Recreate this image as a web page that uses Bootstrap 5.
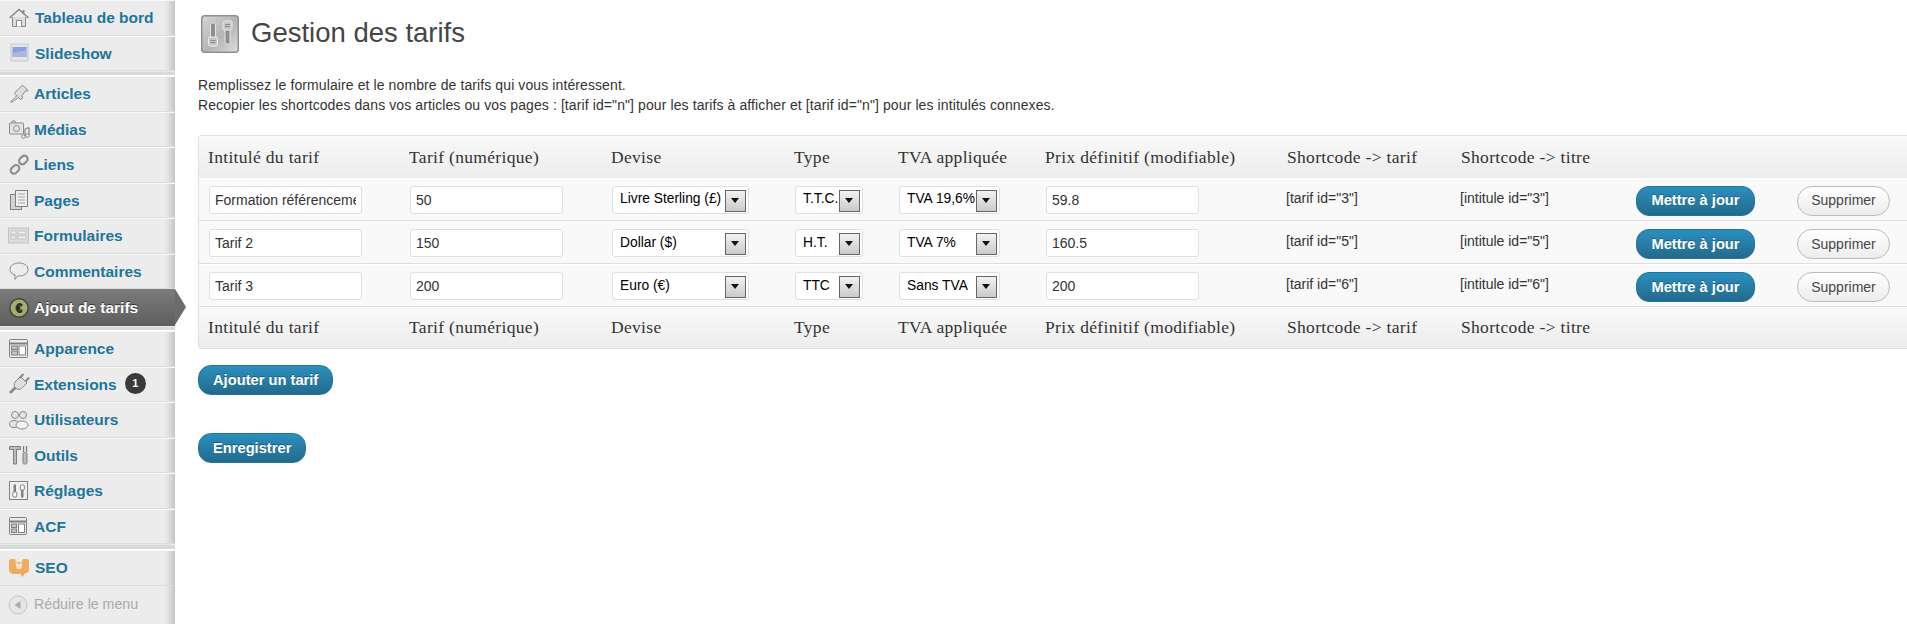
<!DOCTYPE html>
<html lang="fr">
<head>
  <meta charset="UTF-8" />
  <meta name="viewport" content="width=device-width, initial-scale=1.0" />
  <title>Gestion des tarifs</title>
  <link href="https://cdn.jsdelivr.net/npm/bootstrap@5.3.0/dist/css/bootstrap.min.css" rel="stylesheet" />
  <style>
    html, body { height: 100%; overflow: hidden; }
    body { font-family: "Liberation Sans", Arial, sans-serif; font-size: 14px; color: #333; background: #fff; }

    /* admin menu */
    .side-menu { width: 175px; flex: none; height: 624px; background: linear-gradient(to right, #ececec 164px, #e2e2e2 168px, #c4c4c4 175px); }
    .menu-link { height: 35.5px; padding: 1px 0 0 8px; gap: 4px; color: #21759b; font-weight: 700; font-size: 15.5px; text-decoration: none; border-bottom: 1px solid #dcdcdc; box-shadow: inset 0 1px 0 #f8f8f8; }
    .menu-link svg { width: 22px; height: 22px; flex: none; }
    .menu-link.wide-gap { gap: 5px; }
    .menu-link.active-item { height: 37px; position: relative; color: #fff; border: 0; box-shadow: none; background: linear-gradient(#7b7b7b, #5e5e5e); text-shadow: 0 -1px 0 #333; }
    .menu-link.active-item::after { content: ""; position: absolute; left: 175px; top: 0; border-style: solid; border-width: 18.5px 0 18.5px 11px; border-color: transparent transparent transparent #6c6c6c; }
    .menu-gap { height: 5px; background: #d9d9d9; border-top: 1px solid #e8e8e8; border-bottom: 1px solid #fff; }
    .menu-gap.gap-large { height: 6px; }
    .update-count { width: 21px; height: 21px; margin: -1px 0 1px 4px; background: #3a3a3a; color: #fff; font-size: 11px; border-radius: 50%; }
    .menu-foot { height: 38px; padding-left: 8px; gap: 6px; color: #aaa; font-size: 14.2px; }
    .menu-foot svg { width: 20px; height: 20px; }

    /* content */
    .page-area { min-width: 0; padding: 15px 0 0 23px; overflow: hidden; }
    .page-head { margin-left: 3px; gap: 12px; height: 38px; }
    .head-icon { width: 38px; height: 38px; flex: none; }
    .page-head h2 { font-size: 27.5px; font-weight: 400; color: #464646; margin: 0 0 2px; line-height: 34px; }
    .intro-text { margin: 22px 0 0; line-height: 20px; font-size: 14px; letter-spacing: .1px; color: #333; }

    /* tarifs table */
    .tarif-wrap { width: 1760px; margin-top: 20px; border: 1px solid #dfdfdf; border-radius: 3px; overflow: hidden; }
    .tarif-table { table-layout: fixed; width: 1760px; margin: 0; --bs-table-bg: #f9f9f9; }
    .tarif-table col:nth-child(1) { width: 202px; }
    .tarif-table col:nth-child(2) { width: 202px; }
    .tarif-table col:nth-child(3) { width: 183px; }
    .tarif-table col:nth-child(4) { width: 104px; }
    .tarif-table col:nth-child(5) { width: 147px; }
    .tarif-table col:nth-child(6) { width: 242px; }
    .tarif-table col:nth-child(7) { width: 174px; }
    .tarif-table col:nth-child(8) { width: 174px; }
    .tarif-table col:nth-child(9) { width: 161px; }
    .tarif-table th { height: 41.5px; padding: 0 8px; vertical-align: middle; border: 0; font-family: "Liberation Serif", "Times New Roman", serif; font-size: 17.5px; letter-spacing: .32px; font-weight: 400; color: #333; white-space: nowrap; --bs-table-bg: transparent; }
    .tarif-table th:first-child { padding-left: 9px; }
    .tarif-table thead tr, .tarif-table tfoot tr { background: linear-gradient(#f9f9f9, #ececec); }
    .tarif-table td { height: 43px; padding: 8px 0 0 9px; vertical-align: top; border: 0; border-bottom: 1px solid #dfdfdf; box-shadow: inset 0 1px 0 #fff; }
    .tarif-table td:first-child { padding-left: 10px; }
    .code-cell.code-cell { padding-left: 7px; font-size: 14px; line-height: 24px; color: #333; }
    .tarif-input.form-control { height: 28px; width: 153px; padding: 0 5px; font-size: 14px; color: #333; border: 1px solid #dfdfdf; border-radius: 3px; box-shadow: none; }
    .pick-box { position: relative; height: 28px; background: #fff; border: 1px solid #dfdfdf; border-radius: 3px; overflow: hidden; }
    .pick-devise { width: 137px; }
    .pick-type { width: 68px; }
    .pick-tva { width: 101px; }
    .pick-box select { width: 100%; height: 26px; padding: 0 23px 0 7px; border: 0; background: transparent; appearance: none; font-size: 13.8px; color: #000; outline: 0; }
    .pick-arrow { position: absolute; right: 2px; top: 3px; width: 21px; height: 22px; border: 1px solid #666; background: linear-gradient(#f2f2f2, #cacaca); pointer-events: none; }
    .pick-arrow::after { content: ""; position: absolute; left: 5px; top: 7px; border-style: solid; border-width: 5px 4.5px 0; border-color: #111 transparent transparent; }
    .btn-save.btn { height: 30px; padding: 0 14px; font-size: 14.7px; font-weight: 700; color: #fff; border: 1px solid #21759b; border-radius: 13px; background: linear-gradient(#2b8fbe, #236a8c); text-shadow: 0 -1px 0 rgba(0,0,0,.3); white-space: nowrap; }
    .btn-save.btn-update { width: 119px; padding: 0; }
    .btn-remove.btn { width: 93px; height: 30px; padding: 0; font-size: 14px; color: #464646; border: 1px solid #bbb; border-radius: 15px; background: linear-gradient(#fff, #ececec); }
    .table-actions { margin-top: 16px; }
    .form-foot { margin-top: 38px; }
  </style>
</head>
<body>
  <div class="d-flex">
    <nav class="side-menu d-flex flex-column">
      <a class="menu-link wide-gap d-flex align-items-center" href="#">
        <svg viewBox="0 0 22 22" fill="none" stroke="#8a8a8a"><path d="M1.500 11 11 2.500 20.500 11" stroke-width="1.600"/><path d="M4.500 10v9.500h13V10" fill="#ddd"/><path d="M8.500 19.500v-6h5v6" fill="#fff"/><path d="M15.500 3v3.500" stroke-width="2"/></svg>
        Tableau de bord</a>
      <a class="menu-link wide-gap d-flex align-items-center" href="#">
        <svg viewBox="0 0 22 22"><rect x="3" y="2" width="17" height="17" fill="#e2e6e8" stroke="#c6c9cb"/><rect x="4.500" y="5" width="14" height="10" fill="#8c9fd8"/><path d="M4.500 11l6-1 8-2v7h-14z" fill="#a9b7e2"/></svg>
        Slideshow</a>
      <div class="menu-gap"></div>
      <a class="menu-link d-flex align-items-center" href="#">
        <svg viewBox="0 0 22 22" fill="#dcdcdc" stroke="#8a8a8a"><path d="M11 5.500 14.500 2l5.500 5.500-3 1-3 4 .5 3-2 1-6-6 1-1.500z"/><path d="M9 12.500 2.500 19l1 .500 7-5" /></svg>
        Articles</a>
      <a class="menu-link d-flex align-items-center" href="#">
        <svg viewBox="0 0 22 22" fill="none" stroke="#8a8a8a"><rect x="1.500" y="5" width="14" height="11" rx="1" fill="#e4e4e4"/><circle cx="8.500" cy="10.500" r="3"/><path d="M4 5V3h3v2"/><path d="M17 11V18M21 9.500V17M17 11l4-1.500" stroke-width="1.300"/><circle cx="15.500" cy="18.500" r="1.800"/><circle cx="19.500" cy="17.500" r="1.800"/></svg>
        Médias</a>
      <a class="menu-link d-flex align-items-center" href="#">
        <svg viewBox="0 0 22 22" fill="none" stroke="#8f8f8f" stroke-width="2.200"><rect x="10.500" y="3" width="9.500" height="6.500" rx="3.200" transform="rotate(-45 15 6)"/><rect x="2" y="12" width="9.500" height="6.500" rx="3.200" transform="rotate(-45 7 15)"/></svg>
        Liens</a>
      <a class="menu-link d-flex align-items-center" href="#">
        <svg viewBox="0 0 22 22" stroke="#808080"><rect x="2.500" y="5.500" width="11" height="15" fill="#d4d4d4"/><rect x="7.500" y="1.500" width="12" height="16" fill="#eee"/><path d="M10 5h7M10 8h7M10 11h7M10 14h7" stroke="#aaa"/></svg>
        Pages</a>
      <a class="menu-link d-flex align-items-center" href="#">
        <svg viewBox="0 0 22 22" fill="#f2f2f2" stroke="#c2c2c2"><rect x=".5" y="3" width="20" height="15" fill="#ddd"/><rect x="3" y="6" width="5" height="3"/><rect x="10" y="6" width="8" height="3"/><rect x="3" y="11" width="5" height="3"/><rect x="10" y="11" width="8" height="3"/></svg>
        Formulaires</a>
      <a class="menu-link d-flex align-items-center" href="#">
        <svg viewBox="0 0 22 22" stroke="#8a8a8a"><path d="M7 15C3.500 14 2 12 2 9.500 2 5.500 6 3 11 3s9 2.500 9 6.500-4 6.500-9 6.500H9.500L7 19.500z" fill="#ececec"/></svg>
        Commentaires</a>
      <a class="menu-link active-item d-flex align-items-center" href="#">
        <svg viewBox="0 0 22 22"><circle cx="11" cy="11" r="9.200" fill="#a3ad72" stroke="#45452f" stroke-width="1.500"/><text x="11" y="15.500" text-anchor="middle" font-size="13" fill="#2b2e1c">€</text></svg>
        Ajout de tarifs</a>
      <div class="menu-gap"></div>
      <a class="menu-link d-flex align-items-center" href="#">
        <svg viewBox="0 0 22 22" stroke="#808080"><rect x="1.500" y="1.500" width="18" height="18" rx="1" fill="#ececec"/><path d="M1.500 5.500h18" stroke-width="2"/><rect x="3.500" y="8" width="6" height="3.500" fill="#c4c4c4"/><rect x="3.500" y="13" width="6" height="4" fill="#c4c4c4"/><rect x="11" y="8" width="6.500" height="9" fill="#fff"/></svg>
        Apparence</a>
      <a class="menu-link d-flex align-items-center" href="#">
        <svg viewBox="0 0 22 22" fill="#dedede" stroke="#8a8a8a"><path d="M7 9 12.500 3.500 19 10l-5.500 5.500c-2 1.500-4.500 1-6-.5S5.500 11 7 9z"/><path d="M11.500 5 15.500 1M17.500 8.500 21 4.500" stroke-width="2" fill="none"/><path d="M7.500 14.500 2 20" stroke-width="2.600" fill="none"/></svg>
        Extensions
        <span class="update-count d-flex align-items-center justify-content-center fw-bold">1</span></a>
      <a class="menu-link d-flex align-items-center" href="#">
        <svg viewBox="0 0 22 22" fill="#e4e4e4" stroke="#8a8a8a"><circle cx="7" cy="6" r="3.500"/><circle cx="15" cy="6" r="3.500"/><ellipse cx="6" cy="15" rx="4.500" ry="3.500"/><ellipse cx="14" cy="16" rx="6" ry="4" fill="#f2f2f2"/></svg>
        Utilisateurs</a>
      <a class="menu-link d-flex align-items-center" href="#">
        <svg viewBox="0 0 22 22" fill="#bbb" stroke="#808080"><path d="M1.500 2.500h11v3h-4V20h-3V5.500h-4z"/><rect x="15" y="8.500" width="4" height="11.500" rx="1.500"/><path d="M15.500 2v6M18.500 2v6" stroke-width="1.300"/></svg>
        Outils</a>
      <a class="menu-link d-flex align-items-center" href="#">
        <svg viewBox="0 0 22 22" stroke="#808080"><rect x="1.500" y="1.500" width="18" height="18" fill="#efefef"/><rect x="6" y="5" width="1.500" height="7" fill="#888"/><rect x="4.800" y="12" width="4" height="5" rx="1" fill="#fff"/><rect x="13.500" y="10" width="1.500" height="7" fill="#888"/><rect x="12.300" y="5" width="4" height="5" rx="1" fill="#fff"/></svg>
        Réglages</a>
      <a class="menu-link d-flex align-items-center" href="#">
        <svg viewBox="0 0 22 22" stroke="#808080"><rect x="1.500" y="2.500" width="17" height="17" rx="1" fill="#ececec"/><path d="M1.500 6.500h17" stroke-width="2"/><rect x="3.500" y="9" width="5" height="3.500" fill="#c4c4c4"/><rect x="3.500" y="14" width="5" height="3.500" fill="#c4c4c4"/><rect x="10.500" y="9" width="6" height="8.500" fill="#fff"/></svg>
        ACF</a>
      <div class="menu-gap gap-large"></div>
      <a class="menu-link wide-gap d-flex align-items-center" href="#">
        <svg viewBox="0 0 22 22"><path d="M1 4.500C1 3 2 2 3.500 2H7c.5 2.500 1.800 3.500 4 3.500S14.500 4.500 15 2h3.500C20 2 21 3 21 4.500v8.500c0 2-1.500 3-4 3.500l-2.500 3.500-2-3H5c-2.500-.5-4-1.500-4-3.500z" fill="#efac5e"/><path d="M7.500 4c1 2 2 2.800 3.500 2.800S13.500 6 14.500 4l-1 7c-1 1.500-4 1.500-5 0z" fill="#f7e6cf"/></svg>
        SEO</a>
      <div class="menu-foot d-flex align-items-center">
        <svg viewBox="0 0 20 20"><circle cx="10" cy="10" r="9" fill="#e6e6e6" stroke="#c4c4c4"/><path d="M12.500 6v8L6.500 10z" fill="#aaa"/></svg>
        Réduire le menu</div>
    </nav>

    <main class="page-area flex-grow-1">
      <div class="page-head d-flex align-items-center">
        <svg class="head-icon" viewBox="0 0 38 38">
          <defs><linearGradient id="headBg" x1="0" y1="0" x2="1" y2="1"><stop offset="0" stop-color="#d6d6d6"/><stop offset=".55" stop-color="#b4b4b4"/><stop offset="1" stop-color="#e0e0e0"/></linearGradient></defs>
          <rect x=".75" y=".75" width="36.500" height="36.500" rx="3" fill="url(#headBg)" stroke="#8f8f8f" stroke-width="1.500"/>
          <rect x="9.500" y="8" width="5" height="21" rx="1" fill="#8f8f8f" stroke="#e4e4e4"/>
          <rect x="7.500" y="22" width="9" height="9" rx="1.500" fill="#c6c6c6" stroke="#eee"/>
          <path d="M9.500 25.500h5M9.500 27.500h5" stroke="#8a8a8a"/>
          <rect x="24" y="8" width="5" height="21" rx="1" fill="#8f8f8f" stroke="#e4e4e4"/>
          <rect x="22" y="6" width="9" height="9" rx="1.500" fill="#c6c6c6" stroke="#eee"/>
          <path d="M24 9.500h5M24 11.500h5" stroke="#8a8a8a"/>
        </svg>
        <h2>Gestion des tarifs</h2>
      </div>
      <p class="intro-text">Remplissez le formulaire et le nombre de tarifs qui vous intéressent.<br />Recopier les shortcodes dans vos articles ou vos pages : [tarif id="n"] pour les tarifs à afficher et [tarif id="n"] pour les intitulés connexes.</p>

      <div class="tarif-wrap">
        <table class="table tarif-table">
          <colgroup><col /><col /><col /><col /><col /><col /><col /><col /><col /><col /></colgroup>
          <thead>
            <tr><th>Intitulé du tarif</th><th>Tarif (numérique)</th><th>Devise</th><th>Type</th><th>TVA appliquée</th><th>Prix définitif (modifiable)</th><th>Shortcode -&gt; tarif</th><th>Shortcode -&gt; titre</th><th></th><th></th></tr>
          </thead>
          <tbody>
            <tr>
              <td><input class="form-control tarif-input" value="Formation référencement" /></td>
              <td><input class="form-control tarif-input" value="50" /></td>
              <td><div class="pick-box pick-devise"><select><option>Livre Sterling (£)</option></select><span class="pick-arrow"></span></div></td>
              <td><div class="pick-box pick-type"><select><option>T.T.C.</option></select><span class="pick-arrow"></span></div></td>
              <td><div class="pick-box pick-tva"><select><option>TVA 19,6%</option></select><span class="pick-arrow"></span></div></td>
              <td><input class="form-control tarif-input" value="59.8" /></td>
              <td class="code-cell">[tarif id="3"]</td>
              <td class="code-cell">[intitule id="3"]</td>
              <td><button class="btn btn-save btn-update" type="button">Mettre à jour</button></td>
              <td><button class="btn btn-remove" type="button">Supprimer</button></td>
            </tr>
            <tr>
              <td><input class="form-control tarif-input" value="Tarif 2" /></td>
              <td><input class="form-control tarif-input" value="150" /></td>
              <td><div class="pick-box pick-devise"><select><option>Dollar ($)</option></select><span class="pick-arrow"></span></div></td>
              <td><div class="pick-box pick-type"><select><option>H.T.</option></select><span class="pick-arrow"></span></div></td>
              <td><div class="pick-box pick-tva"><select><option>TVA 7%</option></select><span class="pick-arrow"></span></div></td>
              <td><input class="form-control tarif-input" value="160.5" /></td>
              <td class="code-cell">[tarif id="5"]</td>
              <td class="code-cell">[intitule id="5"]</td>
              <td><button class="btn btn-save btn-update" type="button">Mettre à jour</button></td>
              <td><button class="btn btn-remove" type="button">Supprimer</button></td>
            </tr>
            <tr>
              <td><input class="form-control tarif-input" value="Tarif 3" /></td>
              <td><input class="form-control tarif-input" value="200" /></td>
              <td><div class="pick-box pick-devise"><select><option>Euro (€)</option></select><span class="pick-arrow"></span></div></td>
              <td><div class="pick-box pick-type"><select><option>TTC</option></select><span class="pick-arrow"></span></div></td>
              <td><div class="pick-box pick-tva"><select><option>Sans TVA</option></select><span class="pick-arrow"></span></div></td>
              <td><input class="form-control tarif-input" value="200" /></td>
              <td class="code-cell">[tarif id="6"]</td>
              <td class="code-cell">[intitule id="6"]</td>
              <td><button class="btn btn-save btn-update" type="button">Mettre à jour</button></td>
              <td><button class="btn btn-remove" type="button">Supprimer</button></td>
            </tr>
          </tbody>
          <tfoot>
            <tr><th>Intitulé du tarif</th><th>Tarif (numérique)</th><th>Devise</th><th>Type</th><th>TVA appliquée</th><th>Prix définitif (modifiable)</th><th>Shortcode -&gt; tarif</th><th>Shortcode -&gt; titre</th><th></th><th></th></tr>
          </tfoot>
        </table>
      </div>

      <div class="table-actions"><button class="btn btn-save" type="button">Ajouter un tarif</button></div>
      <div class="form-foot"><button class="btn btn-save" type="button">Enregistrer</button></div>
    </main>
  </div>
  <script src="https://cdn.jsdelivr.net/npm/bootstrap@5.3.0/dist/js/bootstrap.bundle.min.js"></script>
</body>
</html>
